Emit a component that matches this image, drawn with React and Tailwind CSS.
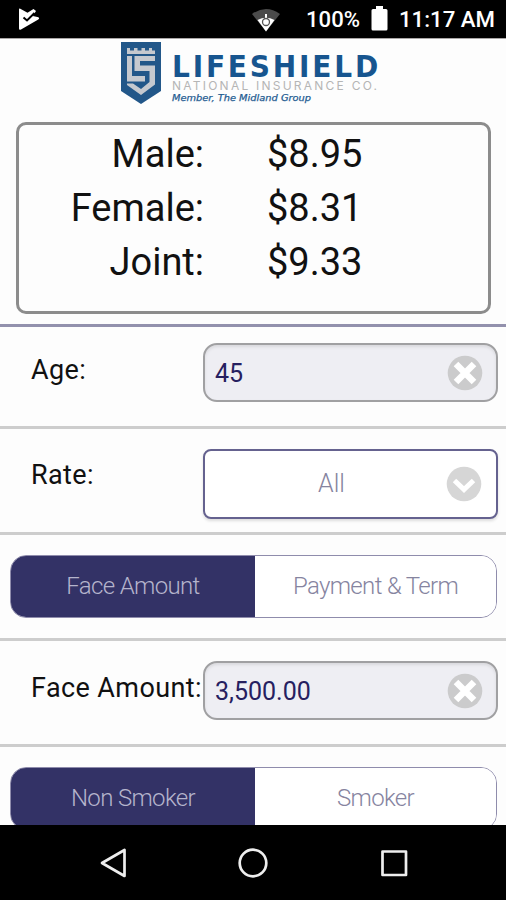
import React, { useState } from 'react';

const rates = [
  { label: 'Male:', price: '$8.95' },
  { label: 'Female:', price: '$8.31' },
  { label: 'Joint:', price: '$9.33' },
];

function StatusBar() {
  return (
    <div className="h-[39px] shrink-0 bg-black border-b border-[#aaa6a6] flex items-center text-white">
      <svg className="ml-[18px] mt-px" width="22" height="23" viewBox="0 0 22 23">
        <path d="M1 1.500Q1 .2 2.300 .8L9.500 4.700L15.500 1L18 3L14.800 8L20.500 9.200Q22 10.500 20.300 11.600L3 21.500Q1 22.300 1 20.500Z" fill="#fff" />
        <path d="M5.500 9.500L9 12.500L16.500 5" fill="none" stroke="#000" strokeWidth="2" />
      </svg>
      <svg className="ml-[212px] mt-px" width="28" height="24" viewBox="0 0 28 24">
        <path d="M0 6Q14 -4 28 6L14 23.500Z" fill="#4b4b4b" />
        <path d="M5.500 12Q14 7.500 22.500 12L14 23.500Z" fill="#fff" />
        <path d="M14 6V20M9 14H19" stroke="#fff" strokeWidth="2" />
        <circle cx="14" cy="14" r="3.500" fill="none" stroke="#555" strokeWidth="1.300" />
      </svg>
      <svg className="ml-[26px]" width="56" height="24">
        <text x="0" y="20" textLength="54" lengthAdjust="spacingAndGlyphs" fill="#fff" className="font-['Roboto',sans-serif] text-[22px] font-medium">100%</text>
      </svg>
      <svg className="ml-[9px]" width="17" height="26" viewBox="0 0 17 26">
        <path d="M5 0H12V3H15Q16.500 3 16.500 4.500V23Q16.500 24.500 15 24.500H2Q.5 24.500 .5 23V4.500Q.5 3 2 3H5Z" fill="#fff" />
      </svg>
      <svg className="ml-[11px]" width="98" height="24">
        <text x="0" y="20" textLength="96" lengthAdjust="spacingAndGlyphs" fill="#fff" className="font-['Roboto',sans-serif] text-[22px] font-medium">11:17 AM</text>
      </svg>
    </div>
  );
}

function Logo() {
  return (
    <svg className="ml-[120px] shrink-0" width="262" height="68" viewBox="120 39 262 68">
      <path d="M121 42H161V91L141 104L121 91Z" fill="#225789" />
      <g fill="#c5c9cf">
        <path d="M127 48H130V50.500H134V48H137.500V50.500H141.500V48H145V50.500H149V48H152V50.500H155V54H127Z" />
        <path d="M127 56H132V76H145V81.500H127Z" />
        <path d="M134.500 56H155V61H140V65.500H155V84.500L141 95L127 85V83.500H133L141 89L149.500 82V71H134.500Z" />
      </g>
      <text x="172" y="76.500" textLength="209" lengthAdjust="spacingAndGlyphs" fill="#17558f" className="font-['DejaVu_Sans',sans-serif] text-[30px] font-bold tracking-[3px]">LIFESHIELD</text>
      <text x="172" y="90" textLength="205" fill="#b5b5b5" className="font-['Inter',sans-serif] text-[12px]">NATIONAL INSURANCE CO.</text>
      <text x="172" y="101" textLength="139" lengthAdjust="spacingAndGlyphs" fill="#1f5c92" stroke="#1f5c92" strokeWidth="0.25" className="font-['DejaVu_Sans',sans-serif] text-[9px] italic">Member, The Midland Group</text>
    </svg>
  );
}

function ClearIcon() {
  return (
    <svg width="36" height="36" viewBox="0 0 36 36">
      <circle cx="18" cy="18" r="17.300" fill="#cbcbcc" />
      <path d="M9 9L27 27M27 9L9 27" stroke="#fff" strokeWidth="6.500" />
    </svg>
  );
}

function Field({ label, value, onClear }) {
  return (
    <div className="flex items-start pl-[31px]">
      <span className="w-[172px] mt-[11px] text-[27px] leading-8 tracking-[0.4px] whitespace-nowrap">{label}</span>
      <div className="w-[295px] h-[59px] rounded-[14px] border-2 border-[#a0a0a2] bg-[#eeeef3] shadow-[inset_0_2px_3px_#d9d9dd] flex items-center justify-between pl-[10px] pr-[13px]">
        <span className="mt-[2px] text-[25px] leading-8 text-[#262060]">{value}</span>
        <button className="mt-px" onClick={onClear}>
          <ClearIcon />
        </button>
      </div>
    </div>
  );
}

function Toggle({ options, active, onChange }) {
  return (
    <div className="ml-[10px] w-[487px] h-[63px] flex shrink-0 rounded-[16px] border-[1.5px] border-[#8f8cac] overflow-hidden text-[24px] font-light tracking-[-0.65px]">
      {options.map((option) => (
        <button
          key={option}
          onClick={() => onChange(option)}
          className={active === option ? 'w-[244px] pb-[2px] bg-[#333266] text-[#b5b4cc]' : 'flex-1 pb-[2px] bg-white text-[#86849f]'}
        >
          {option}
        </button>
      ))}
    </div>
  );
}

function Divider() {
  return <div className="h-[3px] shrink-0 bg-[#cdcdcd]" />;
}

export default function App() {
  const [age, setAge] = useState('45');
  const [amount, setAmount] = useState('3,500.00');
  const [mode, setMode] = useState('Face Amount');
  const [smoker, setSmoker] = useState('Non Smoker');

  return (
    <div className="w-[506px] h-[900px] flex flex-col overflow-hidden bg-[#fdfdfd] font-['Roboto',sans-serif] text-[#111]">
      <StatusBar />
      <div className="h-[786px] shrink-0 flex flex-col overflow-hidden">
        <Logo />
        <div className="mt-[15px] ml-[16px] w-[475px] h-[192px] shrink-0 rounded-[10px] border-3 border-[#8c8c8c] pt-[2px]">
          {rates.map((rate) => (
            <div key={rate.label} className="h-[54px] flex items-center text-[38px]">
              <span className="w-[185px] text-right">{rate.label}</span>
              <span className="ml-[63px]">{rate.price}</span>
            </div>
          ))}
        </div>
        <div className="mt-[10px] h-[3px] shrink-0 bg-[#9391ad]" />

        <div className="h-[99px] shrink-0 pt-[16px]">
          <Field label="Age:" value={age} onClear={() => setAge('')} />
        </div>
        <Divider />
        <div className="h-[103px] shrink-0 flex items-start pt-[20px] pl-[31px]">
          <span className="w-[172px] mt-[10px] text-[27px] leading-8 tracking-[0.4px]">Rate:</span>
          <button className="w-[295px] h-[70px] rounded-[8px] border-2 border-[#65628f] bg-white shadow-[0_2px_3px_#dddddd] flex items-center pr-[14px]">
            <span className="flex-1 pl-[12px] text-center text-[25px] font-light text-[#86849f]">All</span>
            <svg width="36" height="36" viewBox="0 0 36 36">
              <circle cx="18" cy="18" r="17.300" fill="#d6d6d6" />
              <path d="M8.500 14.500L18 23.500L27.500 14.500" fill="none" stroke="#fff" strokeWidth="5" />
            </svg>
          </button>
        </div>
        <Divider />
        <div className="h-[103px] shrink-0 pt-[20px]">
          <Toggle options={['Face Amount', 'Payment & Term']} active={mode} onChange={setMode} />
        </div>
        <Divider />
        <div className="h-[103px] shrink-0 pt-[20px]">
          <Field label="Face Amount:" value={amount} onClear={() => setAmount('')} />
        </div>
        <Divider />
        <div className="pt-[20px]">
          <Toggle options={['Non Smoker', 'Smoker']} active={smoker} onChange={setSmoker} />
        </div>
      </div>

      <div className="h-[75px] shrink-0 bg-black flex items-center pl-[98px]">
        <svg width="320" height="36" viewBox="98 845 320 36" fill="none" stroke="#eee" strokeWidth="2.700" strokeLinejoin="round">
          <path d="M102 863L124.500 850V876Z" />
          <circle cx="253" cy="863" r="13.300" />
          <path d="M382.500 851.500H406V875H382.500Z" />
        </svg>
      </div>
    </div>
  );
}
